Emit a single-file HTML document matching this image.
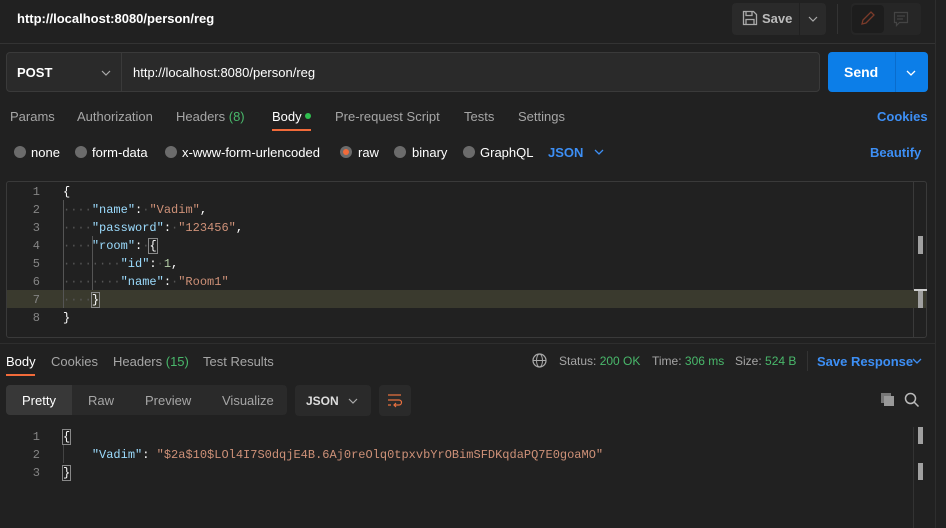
<!DOCTYPE html><html><head><style>
*{margin:0;padding:0;box-sizing:border-box}
body{width:946px;height:528px;background:#212121;font-family:"Liberation Sans",sans-serif;color:#fff;position:relative;overflow:hidden;font-size:13px}
.a{position:absolute;white-space:pre}
.g{color:#a6a6a6}.gr{color:#49b86b}.bl{color:#3d8ff5}
.m{font-family:"Liberation Mono",monospace;font-size:12px;white-space:nowrap}
.k{color:#9cdcfe}.s{color:#ce9178}.n{color:#b5cea8}.d{color:#555}.ln{color:#858585;text-align:right;width:20px}
.dot{width:12px;height:12px;border-radius:50%;background:#6b6b6b;position:absolute}
svg.c{position:absolute;width:10px;height:6px}
</style></head><body>
<div class="a" style="left:17px;top:11px;font-weight:bold;font-size:13px">http://localhost:8080/person/reg</div>
<div class="a" style="left:732px;top:3px;width:94px;height:32px;background:#2a2a2a;border-radius:4px"></div>
<svg class="a" style="left:742px;top:10px" width="16" height="16" viewBox="0 0 16 16"><path d="M1.5 1.5h10l3 3v10h-13z M4 1.5v4h6v-4 M4 14.5v-5h8v5" fill="none" stroke="#aaa" stroke-width="1.3"/></svg>
<div class="a" style="left:762px;top:11px;font-weight:bold;color:#bbb">Save</div>
<div class="a" style="left:799px;top:3px;width:1px;height:32px;background:#212121"></div>
<svg class="c" style="left:808px;top:16px" viewBox="0 0 10 6"><path d="M1 1l4 4 4-4" fill="none" stroke="#aaa" stroke-width="1.2"/></svg>
<div class="a" style="left:837px;top:4px;width:1px;height:30px;background:#333"></div>
<div class="a" style="left:851px;top:3px;width:70px;height:32px;background:#262626;border-radius:4px"></div>
<div class="a" style="left:852px;top:5px;width:32px;height:28px;background:#1d1d1d;border-radius:4px"></div>
<svg class="a" style="left:860px;top:10px" width="16" height="16" viewBox="0 0 16 16"><path d="M2 14l1-4 8-8 3 3-8 8z" fill="none" stroke="#7a3b2a" stroke-width="1.3"/></svg>
<svg class="a" style="left:893px;top:11px" width="16" height="16" viewBox="0 0 16 16"><path d="M1.5 1.5h13v10h-8l-3 3v-3h-2z M4 5h8M4 8h6" fill="none" stroke="#444" stroke-width="1.2"/></svg>
<div class="a" style="left:0;top:43px;width:935px;height:1px;background:#333"></div>
<div class="a" style="left:935px;top:0;width:1px;height:528px;background:#2e2e2e"></div>
<div class="a" style="left:6px;top:52px;width:814px;height:40px;background:#2a2a2a;border:1px solid #3a3a3a;border-radius:4px"></div>
<div class="a" style="left:121px;top:53px;width:1px;height:38px;background:#3a3a3a"></div>
<div class="a" style="left:17px;top:65px;font-weight:bold">POST</div>
<svg class="c" style="left:101px;top:70px" viewBox="0 0 10 6"><path d="M1 1l4 4 4-4" fill="none" stroke="#aaa" stroke-width="1.2"/></svg>
<div class="a" style="left:133px;top:65px">http://localhost:8080/person/reg</div>
<div class="a" style="left:828px;top:52px;width:100px;height:40px;background:#0c7ee8;border-radius:4px"></div>
<div class="a" style="left:895px;top:52px;width:1px;height:40px;background:#0a6ccc"></div>
<div class="a" style="left:844px;top:64px;font-weight:bold;font-size:14px">Send</div>
<svg class="c" style="left:906px;top:70px" viewBox="0 0 10 6"><path d="M1 1l4 4 4-4" fill="none" stroke="#fff" stroke-width="1.3"/></svg>
<div class="a g" style="left:10px;top:109px">Params</div>
<div class="a g" style="left:77px;top:109px">Authorization</div>
<div class="a g" style="left:176px;top:109px">Headers <span class="gr">(8)</span></div>
<div class="a" style="left:272px;top:109px">Body</div>
<div class="a" style="left:305px;top:113px;width:6px;height:6px;border-radius:50%;background:#2fbf4f"></div>
<div class="a" style="left:272px;top:129px;width:39px;height:2px;background:#f26b3a"></div>
<div class="a g" style="left:335px;top:109px">Pre-request Script</div>
<div class="a g" style="left:464px;top:109px">Tests</div>
<div class="a g" style="left:518px;top:109px">Settings</div>
<div class="a bl" style="left:877px;top:109px;font-weight:bold">Cookies</div>
<div class="dot" style="left:14px;top:146px"></div><div class="a" style="left:31px;top:145px">none</div>
<div class="dot" style="left:75px;top:146px"></div><div class="a" style="left:92px;top:145px">form-data</div>
<div class="dot" style="left:165px;top:146px"></div><div class="a" style="left:182px;top:145px">x-www-form-urlencoded</div>
<div class="dot" style="left:340px;top:146px"></div><div class="a" style="left:343px;top:149px;width:6px;height:6px;border-radius:50%;background:#f26b3a"></div><div class="a" style="left:358px;top:145px">raw</div>
<div class="dot" style="left:394px;top:146px"></div><div class="a" style="left:412px;top:145px">binary</div>
<div class="dot" style="left:463px;top:146px"></div><div class="a" style="left:480px;top:145px">GraphQL</div>
<div class="a bl" style="left:548px;top:145px;font-weight:bold">JSON</div>
<svg class="c" style="left:594px;top:149px" viewBox="0 0 10 6"><path d="M1 1l4 4 4-4" fill="none" stroke="#3d8ff5" stroke-width="1.3"/></svg>
<div class="a bl" style="left:870px;top:145px;font-weight:bold">Beautify</div>
<div class="a" style="left:6px;top:181px;width:921px;height:157px;border:1px solid #3a3a3a;border-radius:3px"></div>
<div class="a" style="left:913px;top:182px;width:1px;height:155px;background:#3a3a3a"></div>
<div class="a" style="left:7px;top:290px;width:919px;height:18px;background:#3a3a2e"></div>
<div class="a" style="left:918px;top:236px;width:5px;height:18px;background:#a0a0a0"></div>
<div class="a" style="left:914px;top:289px;width:13px;height:2px;background:#ccc"></div>
<div class="a" style="left:918px;top:291px;width:5px;height:17px;background:#a0a0a0"></div>
<div class="a" style="left:63px;top:200px;width:1px;height:108px;background:#555"></div>
<div class="a" style="left:92px;top:236px;width:1px;height:54px;background:#555"></div>
<div class="a m" style="left:20px;top:183px;line-height:18px;white-space:nowrap"><div><span class="ln" style="display:inline-block">1</span><span style="margin-left:23px">{</span></div><div><span class="ln" style="display:inline-block">2</span><span style="margin-left:23px"><span class="d">····</span><span class="k">"name"</span>:<span class="d">·</span><span class="s">"Vadim"</span>,</span></div><div><span class="ln" style="display:inline-block">3</span><span style="margin-left:23px"><span class="d">····</span><span class="k">"password"</span>:<span class="d">·</span><span class="s">"123456"</span>,</span></div><div><span class="ln" style="display:inline-block">4</span><span style="margin-left:23px"><span class="d">····</span><span class="k">"room"</span>:<span class="d">·</span><span style="outline:1px solid #888">{</span></span></div><div><span class="ln" style="display:inline-block">5</span><span style="margin-left:23px"><span class="d">········</span><span class="k">"id"</span>:<span class="d">·</span><span class="n">1</span>,</span></div><div><span class="ln" style="display:inline-block">6</span><span style="margin-left:23px"><span class="d">········</span><span class="k">"name"</span>:<span class="d">·</span><span class="s">"Room1"</span></span></div><div><span class="ln" style="display:inline-block">7</span><span style="margin-left:23px"><span class="d">····</span><span style="outline:1px solid #888">}</span></span></div><div><span class="ln" style="display:inline-block">8</span><span style="margin-left:23px">}</span></div></div>
<div class="a" style="left:0;top:343px;width:935px;height:1px;background:#2e2e2e"></div>
<div class="a" style="left:6px;top:354px">Body</div>
<div class="a" style="left:6px;top:374px;width:29px;height:2px;background:#f26b3a"></div>
<div class="a g" style="left:51px;top:354px">Cookies</div>
<div class="a g" style="left:113px;top:354px">Headers <span class="gr">(15)</span></div>
<div class="a g" style="left:203px;top:354px">Test Results</div>
<svg class="a" style="left:532px;top:353px" width="15" height="15" viewBox="0 0 15 15"><circle cx="7.5" cy="7.5" r="6.5" fill="none" stroke="#aaa" stroke-width="1.2"/><ellipse cx="7.5" cy="7.5" rx="3" ry="6.5" fill="none" stroke="#aaa"/><path d="M1 7.5h13" stroke="#aaa"/></svg>
<div class="a g" style="left:559px;top:354px;font-size:12px">Status: <span class="gr">200 OK</span></div>
<div class="a g" style="left:652px;top:354px;font-size:12px">Time: <span class="gr">306 ms</span></div>
<div class="a g" style="left:735px;top:354px;font-size:12px">Size: <span class="gr">524 B</span></div>
<div class="a" style="left:807px;top:351px;width:1px;height:20px;background:#333"></div>
<div class="a bl" style="left:817px;top:354px;font-weight:bold">Save Response</div>
<svg class="c" style="left:912px;top:358px" viewBox="0 0 10 6"><path d="M1 1l4 4 4-4" fill="none" stroke="#3d8ff5" stroke-width="1.3"/></svg>
<div class="a" style="left:6px;top:385px;width:281px;height:30px;background:#2a2a2a;border-radius:4px"></div>
<div class="a" style="left:6px;top:385px;width:66px;height:30px;background:#383838;border-radius:4px 0 0 4px"></div>
<div class="a" style="left:22px;top:393px">Pretty</div>
<div class="a g" style="left:88px;top:393px">Raw</div>
<div class="a g" style="left:145px;top:393px">Preview</div>
<div class="a g" style="left:222px;top:393px">Visualize</div>
<div class="a" style="left:295px;top:385px;width:76px;height:31px;background:#2a2a2a;border-radius:4px"></div>
<div class="a" style="left:306px;top:394px;font-weight:bold;font-size:12px;color:#ddd">JSON</div>
<svg class="c" style="left:348px;top:398px" viewBox="0 0 10 6"><path d="M1 1l4 4 4-4" fill="none" stroke="#aaa" stroke-width="1.2"/></svg>
<div class="a" style="left:379px;top:385px;width:32px;height:31px;background:#2a2a2a;border-radius:4px"></div>
<svg class="a" style="left:387px;top:393px" width="16" height="16" viewBox="0 0 16 16"><path d="M1 2h13M1 7h11a2.5 2.5 0 0 1 0 5H7M9 10l-2 2 2 2M1 12h3" fill="none" stroke="#e8703f" stroke-width="1.2"/></svg>
<svg class="a" style="left:880px;top:392px" width="16" height="16" viewBox="0 0 16 16"><rect x="1" y="1" width="10" height="10" fill="#777"/><rect x="4" y="4" width="10" height="10" fill="#999"/></svg>
<svg class="a" style="left:904px;top:392px" width="16" height="16" viewBox="0 0 16 16"><circle cx="6.5" cy="6.5" r="5" fill="none" stroke="#bbb" stroke-width="1.5"/><path d="M10 10l4.5 4.5" stroke="#bbb" stroke-width="1.5"/></svg>
<div class="a" style="left:918px;top:427px;width:5px;height:17px;background:#a0a0a0"></div>
<div class="a" style="left:918px;top:463px;width:5px;height:17px;background:#a0a0a0"></div>
<div class="a" style="left:913px;top:427px;width:1px;height:101px;background:#333"></div>
<div class="a" style="left:63px;top:445px;width:1px;height:18px;background:#444"></div>
<div class="a m" style="left:20px;top:428px;line-height:18px;white-space:nowrap"><div><span class="ln" style="display:inline-block">1</span><span style="margin-left:23px;outline:1px solid #888">{</span></div><div><span class="ln" style="display:inline-block">2</span><span style="margin-left:23px">&nbsp;&nbsp;&nbsp;&nbsp;<span class="k">"Vadim"</span>: <span class="s">"$2a$10$LOl4I7S0dqjE4B.6Aj0reOlq0tpxvbYrOBimSFDKqdaPQ7E0goaMO"</span></span></div><div><span class="ln" style="display:inline-block">3</span><span style="margin-left:23px;outline:1px solid #888">}</span></div></div>
</body></html>
